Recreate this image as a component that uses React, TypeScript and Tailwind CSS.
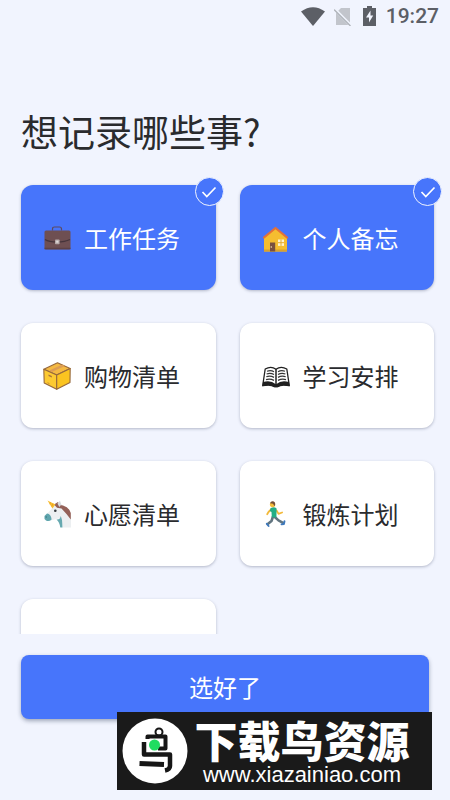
import { useState, type ReactNode } from "react";

const Briefcase = () => (
  <svg viewBox="0 0 28 28" className="size-7" aria-hidden="true">
    <path d="M9.500 6.500V5Q9.500 3 11.500 3h5Q18.500 3 18.500 5V6.500" fill="none" stroke="#5d4b60" strokeWidth="1.200" />
    <rect x="1.500" y="6.500" width="26" height="19" rx="1.500" fill="#6e4f52" />
    <path d="M2 15.500Q6 18 14 18T27 15.500" fill="none" stroke="#46343b" strokeWidth="1.200" />
    <path d="M1.500 24.500h26" stroke="#5c4146" strokeWidth="1.500" />
    <rect x="12" y="15.500" width="4.600" height="4.800" rx=".8" fill="#b5a8a8" />
    <rect x="13.200" y="16.700" width="2.200" height="2" fill="#e3dcdc" />
  </svg>
);

const House = () => (
  <svg viewBox="0 0 28 28" className="size-7" aria-hidden="true">
    <path d="M2 13 13.500 3.500 25 13V27.500H2Z" fill="#f5bd30" />
    <path d="M2 25.500h23v2H2Z" fill="#d9a02c" />
    <path d="M2 13.500 13.500 4 25 13.500" fill="none" stroke="#e2703a" strokeWidth="2.200" strokeLinejoin="round" strokeLinecap="round" />
    <path d="M8 18.500h5.200v9H8Z" fill="#79503f" />
    <circle cx="9.300" cy="23" r=".8" fill="#f3dfb0" />
    <rect x="16" y="15.500" width="6" height="6.400" fill="#fff3cf" />
    <path d="M19 15.500v6.400M16 18.700h6" stroke="#e4a92f" strokeWidth="1" />
  </svg>
);

const Parcel = () => (
  <svg viewBox="0 0 28 28" className="size-7" aria-hidden="true">
    <g stroke="#96683c" strokeWidth="1.100" strokeLinejoin="round">
      <path d="M.8 7.200 14.500.8 27.200 6.500 13.700 13Z" fill="#f4b942" />
      <path d="M.8 7.200 13.700 13v14.200L1.200 21Z" fill="#fdca31" />
      <path d="M27.200 6.500 13.700 13v14.200L27 20.500Z" fill="#fbc420" />
    </g>
    <path d="M6.300 8.500 19.400 2.600 22 4 8.800 10Z" fill="#dc9d55" />
    <path d="m5.500 12.400 3.300 1.500v1.700l-3.300-1.500Z" fill="#a9713e" />
    <path d="M4.500 20.700 6.500 21.700" stroke="#c98d2d" />
  </svg>
);

const Book = () => (
  <svg viewBox="0 0 28 28" className="size-7" aria-hidden="true">
    <path d="M3.200 7Q9 3.500 14 7.200 19 3.500 24.800 7L27.300 23.500Q19 21.500 15.500 24.500H12.500Q9 21.500.7 23.500Z" fill="#fff" stroke="#202020" strokeWidth="1.300" strokeLinejoin="round" />
    <path d="M1 20Q9 18 13.500 22H14.500Q19 18 27 20L27.500 24.300Q19 22.600 16 25.300H12Q9 22.600.5 24.300Z" fill="#202020" />
    <path d="M14 7v16" stroke="#202020" strokeWidth="1.500" />
    <path d="M5 9.200q4-1.400 7 .6M4.600 12q4-1.400 7.400.6M4.300 14.800q4-1.400 7.700.6M4 17.600q4-1.400 8 .8M23 9.200q-4-1.400-7 .6M23.400 12q-4-1.400-7.400.6M23.700 14.800q-4-1.400-7.700.6M24 17.600q-4-1.400-8 .8" fill="none" stroke="#353535" strokeWidth="1.200" />
  </svg>
);

const Unicorn = () => (
  <svg viewBox="0 0 28 28" className="size-7" aria-hidden="true">
    <path d="M12 4.500 17 3l9 8 2 6v10.500h-8L17.500 18 7.500 20.500 2.200 19l1.600-5 5.700-6Z" fill="#eceff1" />
    <path d="M4 13.500Q8 14 8.600 19.500 6 22 3 20.500.8 19 1.500 16Z" fill="#5fa5ad" />
    <path d="M13.500 19.500Q17 20 17.800 16l1.200 4 .5 7.500h-2.200Q16.500 22 13.500 19.500Z" fill="#67a9b0" />
    <path d="M11 4.500 15 2l2 3 3 .5Q26 7 27.800 13v6.500L23.500 14l-5-5.500-4.500-.8Z" fill="#946158" />
    <path d="M14.500 3.500 17 .8l1.300 3.700-2 2.500Z" fill="#d5dade" />
    <path d="M4.500.6 12.500 4.600 9.400 8.500Z" fill="#f9bd2d" />
    <path d="m7.500 2.300-.6 2M10 3.500 8.700 6.500" stroke="#df9825" strokeWidth=".7" />
    <circle cx="12.300" cy="10.800" r="1.300" fill="#34393d" />
    <circle cx="3.200" cy="17" r=".7" fill="#39777e" />
  </svg>
);

const Runner = () => (
  <svg viewBox="0 0 28 28" className="size-7" aria-hidden="true">
    <g fill="none" strokeLinecap="round" strokeLinejoin="round">
      <path d="M9 9.500 6.500 12 5.200 14.200M14.500 10.500l2 3.300 3.600-1.300" stroke="#f3b93a" strokeWidth="1.800" />
      <path d="M11 16.500 9.500 21 5.800 24M12.800 17l3.700 3.400 4.500 2.400" stroke="#627580" strokeWidth="2.600" />
      <path d="m4.800 23.800 1.800 2.200M22.500 21.200l-.6 2.800-2.400.4" stroke="#3e79bd" strokeWidth="1.900" />
    </g>
    <path d="M8.500 8.200Q12 6 14.600 8.500L14.400 17.500 9.800 17.300 9.500 12 7.800 11Z" fill="#23ae85" />
    <circle cx="10.600" cy="4.500" r="2.700" fill="#f6bd3c" />
    <path d="M8 3.300Q9 .6 11.800 1.500 14 3 12.600 6.200L11 3.700Z" fill="#74503b" />
  </svg>
);

type Topic = { name: string; icon: ReactNode };

const topics: Topic[] = [
  { name: "工作任务", icon: <Briefcase /> },
  { name: "个人备忘", icon: <House /> },
  { name: "购物清单", icon: <Parcel /> },
  { name: "学习安排", icon: <Book /> },
  { name: "心愿清单", icon: <Unicorn /> },
  { name: "锻炼计划", icon: <Runner /> },
];

function StatusBar() {
  return (
    <header className="flex h-8 shrink-0 items-center justify-end pr-[11px] text-[#5c5f66]">
      <svg viewBox="0 0 24 19" className="mr-[9px] h-[19px] w-6" fill="currentColor" aria-hidden="true">
        <path d="M0 4.500Q12-4 24 4.500L12 19Z" />
      </svg>
      <svg viewBox="0 0 18 19" className="mr-[11px] h-[19px] w-[18px]" aria-hidden="true">
        <path d="M7 1h9v17H2V6Z" fill="#c2c5cc" />
        <path d="M0 1.500 17 18.500" stroke="#f1f4fe" strokeWidth="3" />
        <path d="M0 2.500 16.500 19" stroke="#aeb1b8" strokeWidth="1.300" />
      </svg>
      <svg viewBox="0 0 13 20" className="mr-[10px] h-5 w-[13px]" aria-hidden="true">
        <path d="M4 0h5v2h4v18H0V2h4Z" fill="currentColor" />
        <path d="M7.500 4.500 3 11.500h3v5l4.200-7H7.500Z" fill="#f1f4fe" />
      </svg>
      <time className="font-[Roboto,sans-serif] text-[21px] leading-8 font-medium">19:27</time>
    </header>
  );
}

function TopicCard({ topic, checked, onToggle }: { topic: Topic; checked: boolean; onToggle: () => void }) {
  return (
    <label
      className={`relative flex h-[105px] cursor-pointer items-center gap-[13px] rounded-xl pl-[22px] text-2xl shadow-[0_1px_3px_rgba(60,70,100,0.35)] ${
        checked ? "bg-[#4775fb] text-white" : "bg-white text-[#2a2b2e]"
      }`}
    >
      <input type="checkbox" className="sr-only" checked={checked} onChange={onToggle} />
      {topic.icon}
      <span className="whitespace-nowrap">{topic.name}</span>
      {checked && (
        <span className="absolute -top-2 -right-2 flex size-[29px] items-center justify-center rounded-full border border-[#f1f4fe] bg-[#4775fb]">
          <svg viewBox="0 0 16 12" className="h-3 w-4" fill="none" aria-hidden="true">
            <path d="m1.500 6 4.300 4.500L14.500 1.500" stroke="#fff" strokeWidth="1.700" />
          </svg>
        </span>
      )}
    </label>
  );
}

function SiteBanner() {
  return (
    <aside className="absolute right-[18px] bottom-[10px] flex h-[78px] w-[315px] items-center bg-[#1a1a1a] pr-4 pl-[5px] text-white">
      <svg viewBox="0 0 66 66" className="size-[66px] shrink-0" aria-hidden="true">
        <circle cx="33" cy="33" r="32.500" fill="#fff" />
        <g fill="none" stroke="#161616" strokeLinejoin="round">
          <circle cx="37" cy="14" r="3.500" strokeWidth="2" />
          <path d="M25.500 21V18.500H43.500V30.500H36" strokeWidth="4" />
          <path d="M22 24v12.500H48V48Q48 51.500 43 52.500" strokeWidth="4.500" />
          <path d="M17.500 45.500 42 46.500" strokeWidth="5" />
        </g>
        <circle cx="32.500" cy="27" r="5.500" fill="#20dc61" />
      </svg>
      <div className="flex flex-1 flex-col items-center pt-1">
        <strong className="text-[43px] leading-[44px] font-black whitespace-nowrap">下载鸟资源</strong>
        <span className="font-['Liberation_Sans',Arial,sans-serif] text-[22px] leading-7">www.xiazainiao.com</span>
      </div>
    </aside>
  );
}

export default function App() {
  const [selected, setSelected] = useState<string[]>(["工作任务", "个人备忘"]);

  const toggle = (name: string) =>
    setSelected((now) => (now.includes(name) ? now.filter((n) => n !== name) : [...now, name]));

  return (
    <div className="relative flex h-screen flex-col bg-[#f1f4fe] font-['Noto_Sans_CJK_SC',sans-serif]">
      <StatusBar />
      <h1 className="mt-[72px] shrink-0 px-[21px] text-[37px] leading-[54px] text-[#2a2b2e]">想记录哪些事?</h1>
      <main className="mt-[15px] min-h-0 flex-1 overflow-y-auto pt-3 pr-4 pl-[21px] [scrollbar-width:none]">
        <div className="grid grid-cols-2 gap-x-6 gap-y-[33px]">
          {topics.map((topic) => (
            <TopicCard
              key={topic.name}
              topic={topic}
              checked={selected.includes(topic.name)}
              onToggle={() => toggle(topic.name)}
            />
          ))}
          <div className="h-[105px] rounded-xl bg-white shadow-[0_1px_3px_rgba(60,70,100,0.35)]" />
        </div>
      </main>
      <footer className="shrink-0 px-[21px] pt-[21px] pb-[81px]">
        <button
          type="button"
          className="h-16 w-full rounded-lg bg-[#4775fb] text-2xl text-white shadow-[0_2px_4px_rgba(60,70,100,0.45)]"
        >
          选好了
        </button>
      </footer>
      <SiteBanner />
    </div>
  );
}
